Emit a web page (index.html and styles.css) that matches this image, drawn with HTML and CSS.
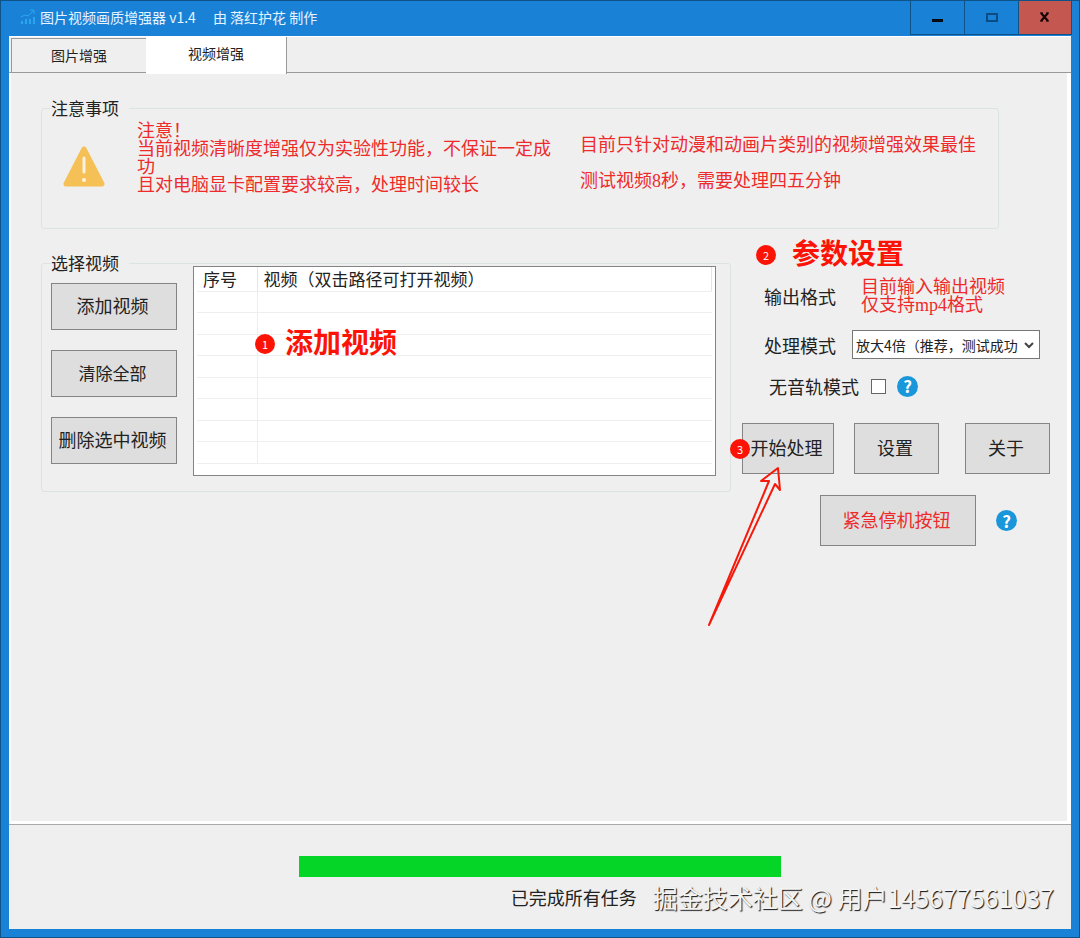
FILE: index.html
```html
<!DOCTYPE html>
<html lang="zh-CN">
<head>
    <meta charset="UTF-8">
    <meta name="viewport" content="width=device-width, initial-scale=1.0">
    <title>图片视频画质增强器 v1.4</title>
    <link rel="stylesheet" href="styles.css">
</head>
<body>

<div class="window">
    <!-- Title bar -->
    <header class="titlebar">
        <svg class="app-icon" width="16" height="16" viewBox="0 0 16 16" fill="none" stroke="#2ba6ee">
            <path d="M1 8l4-2 3 1 5-5M10 1h4v4"/>
            <path d="M2 15v-3M6 15v-5M10 15v-5M14 15V8" stroke-width="2"/>
        </svg>
        <span class="app-name">图片视频画质增强器 v1.4</span>
        <span class="app-author">由 落红护花 制作</span>
        <div class="window-buttons">
            <button type="button" aria-label="最小化"><svg width="12" height="12"><path d="M0 8h11v3H0z" fill="#050a12"/></svg></button>
            <button type="button" aria-label="最大化"><svg width="12" height="12"><path d="M1 3h10v7H1z" fill="none" stroke="#0b4c85" stroke-width="2"/></svg></button>
            <button type="button" class="close" aria-label="关闭"><svg width="12" height="12"><path d="M2 2l7 8M9 2l-7 8" stroke="#120505" stroke-width="2"/><path d="M1 2h3M7 2h3M1 10h3M7 10h3" stroke="#120505"/></svg></button>
        </div>
    </header>

    <main class="client">
        <div class="tabs" role="tablist">
            <button type="button" class="tab" role="tab">图片增强</button>
            <button type="button" class="tab active" role="tab" aria-selected="true">视频增强</button>
        </div>

        <div class="pane">
            <!-- Notice -->
            <fieldset class="group notice">
                <legend>注意事项</legend>
                <svg class="warning" width="44" height="42" viewBox="0 0 44 42">
                    <path d="M22 3L40 38H4z" fill="#f5c056" stroke="#f5c056" stroke-width="5" stroke-linejoin="round"/>
                    <path d="M22 12v14" stroke="#fbf1df" stroke-width="3" stroke-linecap="round"/>
                    <circle cx="22" cy="34" r="2" fill="#fbf1df"/>
                </svg>
                <p class="notice-text">注意！<br>当前视频清晰度增强仅为实验性功能，不保证一定成功<br>且对电脑显卡配置要求较高，处理时间较长</p>
                <p class="notice-tips">目前只针对动漫和动画片类别的视频增强效果最佳<br>测试视频8秒，需要处理四五分钟</p>
            </fieldset>

            <div class="work">
                <!-- Video list -->
                <fieldset class="group videos">
                    <legend>选择视频</legend>
                    <div class="video-actions">
                        <button type="button" class="btn">添加视频</button>
                        <button type="button" class="btn small">清除全部</button>
                        <button type="button" class="btn">删除选中视频</button>
                    </div>
                    <div class="list">
                        <table>
                            <thead>
                                <tr><th class="num">序号</th><th>视频（双击路径可打开视频）</th></tr>
                            </thead>
                            <tbody>
                                <tr><td></td><td></td></tr>
                                <tr><td></td><td></td></tr>
                                <tr><td></td><td></td></tr>
                                <tr><td></td><td></td></tr>
                                <tr><td></td><td></td></tr>
                                <tr><td></td><td></td></tr>
                                <tr><td></td><td></td></tr>
                                <tr><td></td><td></td></tr>
                            </tbody>
                        </table>
                        <div class="step step-add"><span class="badge">1</span><strong>添加视频</strong></div>
                    </div>
                </fieldset>

                <!-- Parameters -->
                <form class="settings">
                    <div class="step"><span class="badge">2</span><strong>参数设置</strong></div>
                    <div class="row format">
                        <span class="label">输出格式</span>
                        <span class="hint">目前输入输出视频<br>仅支持mp4格式</span>
                    </div>
                    <div class="row mode">
                        <label class="label" for="mode">处理模式</label>
                        <div class="select">
                            <select id="mode">
                                <option>放大4倍（推荐，测试成功</option>
                            </select>
                            <svg width="10" height="8" viewBox="0 0 10 8"><path d="M1 2l4 4 4-4" fill="none" stroke="#444" stroke-width="2"/></svg>
                        </div>
                    </div>
                    <div class="row audio">
                        <label for="mute">无音轨模式</label>
                        <input type="checkbox" id="mute">
                        <button type="button" class="help" aria-label="帮助">?</button>
                    </div>
                    <div class="row main-actions">
                        <div class="start">
                            <button type="button" class="btn">开始处理</button>
                            <span class="badge">3</span>
                            <svg class="arrow" width="80" height="168" viewBox="0 0 80 168" fill="none" stroke="#f5190b" stroke-width="2" stroke-linejoin="round" stroke-linecap="round">
                                <path d="M5 162L65 18l-8 0L74 5l2 22-5-6z"/>
                            </svg>
                        </div>
                        <button type="button" class="btn">设置</button>
                        <button type="button" class="btn">关于</button>
                    </div>
                    <div class="row stop">
                        <button type="button" class="btn danger">紧急停机按钮</button>
                        <button type="button" class="help" aria-label="帮助">?</button>
                    </div>
                </form>
            </div>
        </div>

        <!-- Status -->
        <footer class="status">
            <progress value="100" max="100" aria-label="进度"></progress>
            <div class="status-line">
                <span>已完成所有任务</span>
                <span class="watermark">掘金技术社区 @ 用户145677561037</span>
            </div>
        </footer>
    </main>
</div>

</body>
</html>
```
FILE: styles.css
```css
* {
    box-sizing: border-box;
}
body {
    margin: 0;
    font-family: "Noto Sans CJK SC", sans-serif;
    font-size: 18px;
    color: #222;
}
button, select {
    font-family: inherit;
    color: inherit;
}
p {
    margin: 0;
}
.window {
    display: flex;
    flex-direction: column;
    min-height: 100vh;
    padding: 0 8px 8px;
    background-color: #1982d7;
    border: 1px solid #0f5288;
}

/* Title bar */
.titlebar {
    display: flex;
    align-items: center;
    height: 35px;
    padding: 0 0 3px 11px;
    font-size: 14px;
    color: #e6f4ff;
}
.app-name {
    margin-left: 4px;
}
.app-author {
    margin-left: 17px;
}
.window-buttons {
    display: flex;
    align-self: flex-start;
    height: 34px;
    margin-left: auto;
    margin-right: -1px;
}
.window-buttons button {
    width: 54px;
    padding: 0;
    background-color: transparent;
    border: 1px solid #0f5288;
    border-width: 0 0 1px 1px;
}
.window-buttons .close {
    background-color: #c4574f;
    border-right-width: 1px;
}

/* Tabs */
.client {
    display: flex;
    flex-direction: column;
    flex: 1;
    background-color: #efefef;
    border-top: 1px solid #fff;
}
.tabs {
    display: flex;
    align-items: flex-end;
    height: 36px;
    padding-left: 2px;
    border-bottom: 1px solid #999;
}
.tab {
    width: 135px;
    height: 34px;
    padding: 0 0 2px;
    font-size: 14px;
    background-color: #efefef;
    border: 1px solid #999;
    border-width: 1px 0 0 1px;
}
.tab.active {
    width: 141px;
    height: 37px;
    margin-bottom: -2px;
    padding-bottom: 6px;
    background-color: #fff;
    border-width: 0 1px 0 0;
}
.pane {
    flex: 1;
    padding: 35px 17px 32px 30px;
    border: solid #fff;
    border-width: 0 4px 3px 2px;
}

/* Group boxes */
.group {
    display: flex;
    min-width: 0;
    margin: 0;
    padding: 0 14px 15px 9px;
    border: 1px solid #dce3e3;
    border-radius: 3px;
}
.group legend {
    height: 1px;
    padding: 0 10px 0 0;
    font-size: 17px;
    line-height: 0;
}
.notice {
    height: 121px;
    margin-right: 51px;
    color: #ee2a2a;
}
.notice legend {
    color: #222;
}
.warning {
    flex: none;
    margin: 37px 31px 0 11px;
}
.notice-text {
    flex: 0 1 420px;
    margin: 11px 23px 0 0;
    line-height: 18px;
}
.notice-tips {
    margin-top: 18px;
    line-height: 36px;
}
.notice-tips, .hint {
    font-family: "Liberation Serif", "Noto Sans CJK SC", serif;
}
.work {
    display: flex;
    align-items: flex-start;
    gap: 11px;
    margin-top: 6px;
}
.videos {
    flex: 1;
    margin-top: 28px;
}
.video-actions {
    display: flex;
    flex-direction: column;
    gap: 20px;
    width: 126px;
    padding-top: 19px;
}

/* Buttons */
.btn {
    height: 51px;
    padding: 0 3px 3px 0;
    font-size: 18px;
    background-color: #dedede;
    border: 1px solid #848484;
}
.video-actions .btn {
    height: 47px;
}
.btn.small {
    font-size: 17px;
}
.btn.danger {
    width: 156px;
    color: #ee2a2a;
}
.help {
    width: 21px;
    height: 21px;
    padding: 0;
    font-size: 17px;
    font-weight: bold;
    line-height: 20px;
    color: #fff;
    background-color: #1a96db;
    border: 0;
    border-radius: 50%;
}

/* Video table */
.list {
    position: relative;
    flex: 1;
    height: 210px;
    margin: 2px 0 0 16px;
    padding: 0 3px;
    background-color: #fff;
    border: 1px solid #848484;
}
table {
    width: 100%;
    table-layout: fixed;
    border-collapse: collapse;
}
th, td {
    height: 22px;
    padding: 0 6px;
    border-bottom: 1px solid #eee;
}
tbody tr:nth-child(odd) td {
    height: 21px;
}
th {
    height: 24px;
    font-size: 17px;
    font-weight: normal;
    line-height: 22px;
    text-align: left;
    border-right: 1px solid #e4e4e4;
}
th.num {
    width: 60px;
}
td:first-child {
    border-right: 1px solid #eee;
}

/* Numbered steps */
.step {
    display: flex;
    align-items: center;
    height: 34px;
    font-size: 28px;
    line-height: 30px;
    color: #fb1405;
}
.badge {
    width: 20px;
    height: 20px;
    font-size: 11px;
    line-height: 20px;
    text-align: center;
    color: #fff;
    background-color: #fb1405;
    border-radius: 50%;
}
.step .badge {
    margin-top: 5px;
}
.step strong {
    margin-left: 16px;
}
.step-add {
    position: absolute;
    top: 57px;
    left: 61px;
}
.step-add strong {
    margin-left: 10px;
}

/* Settings */
.settings {
    flex: none;
    width: 308px;
}
.settings .step {
    padding-left: 14px;
}
.row {
    display: flex;
    align-items: center;
}
.label {
    width: 88px;
}
.format, .mode {
    padding-left: 22px;
}
.format {
    margin-top: 9px;
}
.hint {
    padding-left: 9px;
    line-height: 18px;
    color: #ee2a2a;
}
.mode {
    margin-top: 16px;
    line-height: 28px;
}
.select {
    position: relative;
}
.select select {
    display: block;
    appearance: none;
    width: 188px;
    height: 29px;
    padding: 0 20px 0 3px;
    font-size: 14px;
    background-color: #fff;
    border: 1px solid #777;
    border-radius: 0;
}
.select svg {
    position: absolute;
    top: 11px;
    right: 6px;
    pointer-events: none;
}
.audio {
    margin-top: 15px;
    padding-left: 27px;
    line-height: 24px;
}
.audio input {
    appearance: none;
    width: 15px;
    height: 15px;
    margin: 0 11px 0 12px;
    background-color: #fff;
    border: 1px solid #666;
}
.main-actions {
    justify-content: space-between;
    margin-top: 25px;
}
.main-actions .btn {
    width: 85px;
}
.start {
    position: relative;
    margin-right: -6px;
}
.start .btn {
    display: block;
    width: 92px;
}
.start .badge {
    position: absolute;
    top: 16px;
    left: -12px;
}
.arrow {
    position: absolute;
    top: 40px;
    left: -38px;
    pointer-events: none;
}
.stop {
    justify-content: flex-end;
    gap: 20px;
    margin-top: 21px;
    padding-right: 33px;
}

/* Status bar */
.status {
    height: 105px;
    padding-top: 31px;
    border-top: 1px solid #aaa;
}
progress {
    display: block;
    appearance: none;
    width: 482px;
    max-width: 100%;
    height: 21px;
    margin: 0 auto;
    background-color: #04d526;
    border: 0;
}
progress::-webkit-progress-bar,
progress::-webkit-progress-value {
    background-color: #04d526;
}
.status-line {
    display: flex;
    align-items: center;
    justify-content: flex-end;
    gap: 16px;
    margin-top: 3px;
    padding-right: 17px;
    line-height: 34px;
}
.watermark {
    font-size: 25px;
    color: #f4f4f4;
    text-shadow: 1px 1px 1px #111;
}
```
